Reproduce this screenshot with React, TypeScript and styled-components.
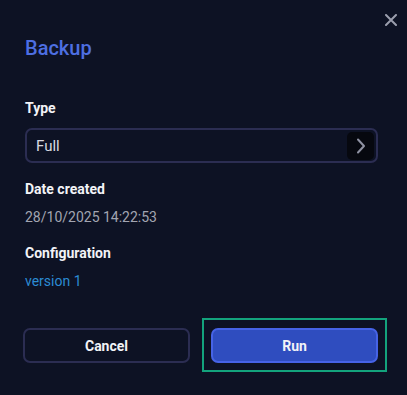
import styled, { createGlobalStyle } from 'styled-components'

const GlobalStyle = createGlobalStyle`
  html, body {
    margin: 0;
    padding: 0;
    background: #0d1224;
  }
  body {
    font-family: Roboto, "Liberation Sans", sans-serif;
  }
`

export default function App() {
  return (
    <>
      <GlobalStyle />
      <Dialog>
        <CloseButton aria-label="Close">
          <svg width="12" height="12" viewBox="0 0 12 12">
            <path
              d="M1 1L11 11M11 1L1 11"
              stroke="#9b9eae"
              strokeWidth="2"
              strokeLinecap="round"
            />
          </svg>
        </CloseButton>
        <Title>Backup</Title>

        <Label $top={36}>Type</Label>
        <Select>
          <SelectValue>Full</SelectValue>
          <ChevronButton>
            <svg width="10" height="16" viewBox="0 0 10 16">
              <path
                d="M2 1.5L8 8L2 14.5"
                fill="none"
                stroke="#8f92a3"
                strokeWidth="2"
                strokeLinecap="round"
                strokeLinejoin="round"
              />
            </svg>
          </ChevronButton>
        </Select>

        <Label $top={16}>Date created</Label>
        <Value>28/10/2025 14:22:53</Value>

        <Label $top={16}>Configuration</Label>
        <LinkValue href="#">version 1</LinkValue>

        <Footer>
          <Button>Cancel</Button>
          <FocusRing>
            <Button $primary>Run</Button>
          </FocusRing>
        </Footer>
      </Dialog>
    </>
  )
}

const Dialog = styled.div`
  position: relative;
  width: 407px;
  height: 395px;
  box-sizing: border-box;
  padding: 34px 29px 0 25px;
  display: flex;
  flex-direction: column;
  background: #0d1224;
`

const CloseButton = styled.button`
  position: absolute;
  top: 14px;
  right: 10px;
  width: 12px;
  height: 12px;
  padding: 0;
  border: none;
  background: transparent;
  display: flex;
  cursor: pointer;
`

const Title = styled.h2`
  margin: 0;
  font-size: 20px;
  line-height: 28px;
  font-weight: 500;
  color: #4d6fe2;
`

const Label = styled.div<{ $top: number }>`
  margin-top: ${(p) => p.$top}px;
  font-size: 14px;
  line-height: 20px;
  font-weight: 700;
  color: #f2f3f7;
`

const Select = styled.div`
  margin-top: 10px;
  height: 35px;
  box-sizing: border-box;
  border: 2px solid #2b2d52;
  border-radius: 7px;
  display: flex;
  align-items: center;
  padding: 0 2px 0 9px;
`

const SelectValue = styled.span`
  flex: 1;
  font-size: 15px;
  color: #d7d9e0;
`

const ChevronButton = styled.span`
  width: 27px;
  height: 28px;
  border-radius: 5px;
  background: #06080f;
  display: flex;
  align-items: center;
  justify-content: center;
`

const Value = styled.div`
  margin-top: 8px;
  font-size: 14px;
  line-height: 20px;
  color: #a2a5b1;
`

const LinkValue = styled.a`
  margin-top: 8px;
  font-size: 14px;
  line-height: 20px;
  color: #2b8bd3;
  text-decoration: none;
  align-self: flex-start;
`

const Footer = styled.div`
  margin: 37px 0 0 -2px;
  display: grid;
  grid-template-columns: 167px 167px;
  column-gap: 21px;
`

const FocusRing = styled.div`
  margin: -10px -9px -9px;
  padding: 8px 7px 7px;
  border: 2px solid #13a37d;
  display: grid;
`

const Button = styled.button<{ $primary?: boolean }>`
  height: 35px;
  box-sizing: border-box;
  border-radius: 7px;
  font-family: Roboto, "Liberation Sans", sans-serif;
  font-size: 14px;
  font-weight: 700;
  color: #f2f3f7;
  cursor: pointer;
  border: 2px solid ${(p) => (p.$primary ? '#4663e6' : '#2b2d52')};
  background: ${(p) => (p.$primary ? '#2f4dbf' : 'transparent')};
  outline: none;
`
